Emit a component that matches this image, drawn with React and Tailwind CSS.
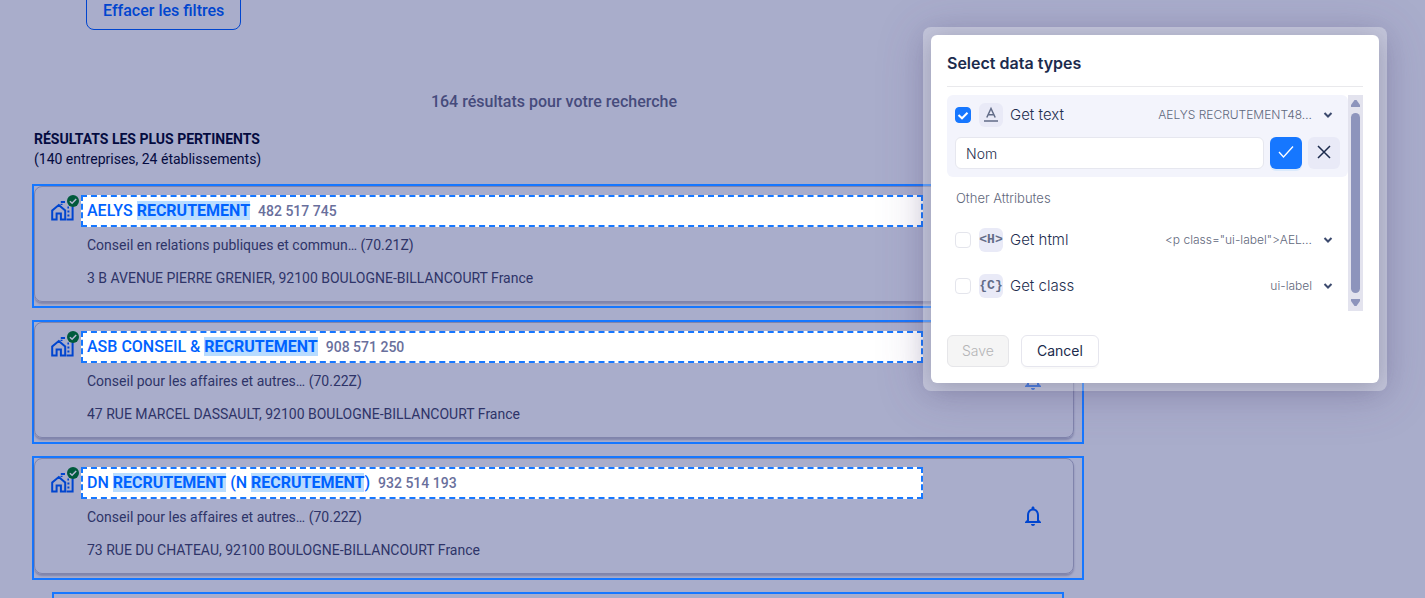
import React, { useState } from 'react';
import { MdNotificationsNone } from 'react-icons/md';

const companies = [
  {
    name: ['AELYS ', '*RECRUTEMENT'],
    siren: '482 517 745',
    activity: 'Conseil en relations publiques et commun… (70.21Z)',
    address: '3 B AVENUE PIERRE GRENIER, 92100 BOULOGNE-BILLANCOURT France'
  },
  {
    name: ['ASB CONSEIL & ', '*RECRUTEMENT'],
    siren: '908 571 250',
    activity: 'Conseil pour les affaires et autres… (70.22Z)',
    address: '47 RUE MARCEL DASSAULT, 92100 BOULOGNE-BILLANCOURT France'
  },
  {
    name: ['DN ', '*RECRUTEMENT', ' (N ', '*RECRUTEMENT', ')'],
    siren: '932 514 193',
    activity: 'Conseil pour les affaires et autres… (70.22Z)',
    address: '73 RUE DU CHATEAU, 92100 BOULOGNE-BILLANCOURT France'
  }
];

function CompanyIcon() {
  return (
    <div className="relative w-6 h-6 mt-0.5 shrink-0">
      <svg viewBox="0 0 24 24" className="w-6 h-6" fill="none" stroke="#0045cf" strokeWidth="2">
        <path d="M1.2 22.5V13.5L7.8 8L14.2 13.5V22.5H9.9V16.5H5.6V22.5H1.2Z" />
        <path d="M10.5 8V6.8M9.8 5H14M15.5 22.5H21.6V9.5" />
        <path d="M16.4 10.5H18M16.4 14.5H18.4M16.4 18.5H18.4" />
      </svg>
      <svg viewBox="0 0 12 12" className="absolute -top-0.5 left-4 w-3 h-3">
        <circle cx="6" cy="6" r="6" fill="#005a3c" />
        <path d="M2.9 6.2L5.1 8.2L9.2 4" fill="none" stroke="#b4b8d4" strokeWidth="1.5" />
      </svg>
    </div>
  );
}

function CompanyCard({ company }) {
  return (
    <li className="border-2 border-[#1677ff] pr-2 pb-1">
      <article className="flex rounded-lg border border-[#8084ac] shadow-[0_2px_2px_rgba(70,72,125,0.4)] pl-4">
        <div className="pt-2">
          <CompanyIcon />
        </div>
        <div className="flex-1 min-w-0 ml-1.5 pt-2 pb-[13px] text-sm leading-5 text-[#2e3468]">
          <h3 className="h-8 flex items-center border-2 border-dashed border-[#1677ff] bg-white pl-1 text-base font-medium text-[#0062ff]">
            <a href="#" className="whitespace-pre leading-5">
              {company.name.map((part, i) =>
                part.startsWith('*') ? (
                  <mark key={i} className="bg-[#b8dcff] text-[#0062ff] font-bold">{part.slice(1)}</mark>
                ) : (
                  <span key={i}>{part}</span>
                )
              )}
            </a>
            <span className="ml-2 text-sm text-[#696f9c]">{company.siren}</span>
          </h3>
          <p className="mt-2 pl-1.5">{company.activity}</p>
          <p className="mt-[13px] pl-1.5">{company.address}</p>
        </div>
        <div className="w-[150px] flex items-center justify-end pr-7">
          <button type="button" aria-label="Notifications" className="text-[#0045cf]">
            <MdNotificationsNone size={24} />
          </button>
        </div>
      </article>
    </li>
  );
}

function Chevron() {
  return (
    <svg viewBox="0 0 10 10" className="w-2.5 h-2.5 shrink-0" fill="none" stroke="#3c4a6e" strokeWidth="2">
      <path d="M1.5 3L5 6.5L8.5 3" />
    </svg>
  );
}

function TypeRow({ id, label, value, glyph, checked, onChange }) {
  return (
    <div className="flex items-center h-6">
      <span className="relative w-4 h-4 shrink-0">
        <input
          id={id}
          type="checkbox"
          checked={checked}
          onChange={onChange}
          className="block w-4 h-4 appearance-none rounded border border-[#e4e5ec] bg-white checked:bg-[#1677ff] checked:border-[#1677ff]"
        />
        {checked && (
          <svg viewBox="0 0 16 16" className="absolute inset-0 w-4 h-4 pointer-events-none" fill="none" stroke="white" strokeWidth="2">
            <path d="M3.5 8L7 11.3L12.5 5.8" />
          </svg>
        )}
      </span>
      <span className="ml-2 w-6 h-6 rounded-md bg-[#e9eaf7] flex items-center justify-center shrink-0 text-[#626c88]">{glyph}</span>
      <label htmlFor={id} className="ml-[7px] text-[15px] leading-5 font-light text-[#1f2f50]">{label}</label>
      <span className="ml-auto min-w-0 text-xs leading-5 font-light text-[#5f687c] whitespace-nowrap">{value}</span>
      <button type="button" aria-label={`Expand ${label}`} className="ml-[11px] mr-[7px]">
        <Chevron />
      </button>
    </div>
  );
}

function Scrollbar() {
  return (
    <div className="w-[15px] bg-[#e3e3ee] flex flex-col items-center py-1">
      <svg viewBox="0 0 9 9" className="w-[9px] h-[9px]" fill="#8d94bc">
        <path d="M3.5 1H5.5L9 6V8H0V6Z" />
      </svg>
      <div className="flex-1 w-[9px] my-[5px] rounded-full bg-[#8d94bc]"></div>
      <svg viewBox="0 0 9 9" className="w-[9px] h-[9px]" fill="#8d94bc">
        <path d="M3.5 8H5.5L9 3V1H0V3Z" />
      </svg>
    </div>
  );
}

function DataTypesDialog() {
  const [selected, setSelected] = useState({ text: true, html: false, class: false });
  const toggle = (key) => setSelected({ ...selected, [key]: !selected[key] });

  return (
    <div className="absolute top-[27px] right-[38px] w-[464px] p-2 rounded-lg bg-white/30 shadow-[0_6px_48px_rgba(90,70,130,0.22)] font-[Inter,sans-serif]">
      <section role="dialog" aria-labelledby="dialog-title" className="rounded-md bg-white p-4 shadow-[0_4px_24px_rgba(60,60,90,0.3)]">
        <h2 id="dialog-title" className="h-9 text-base leading-6 font-semibold text-[#1c2b4d] border-b border-[#e9e9ec]">
          Select data types
        </h2>
        <div className="mt-2 flex h-[216px]">
          <div className="flex-1 min-w-0">
            <div className="rounded-md bg-[#f3f4fc] p-2">
              <TypeRow
                id="get-text"
                label="Get text"
                value="AELYS RECRUTEMENT48…"
                checked={selected.text}
                onChange={() => toggle('text')}
                glyph={
                  <svg viewBox="0 0 24 24" className="w-6 h-6" fill="none" stroke="currentColor" strokeWidth="1.5">
                    <path d="M7.8 14.5L12 5.5L16.2 14.5M9.2 11.8H14.8M5 18H19" />
                  </svg>
                }
              />
              <div className="mt-2.5 flex gap-1.5">
                <input
                  aria-label="Name"
                  defaultValue="Nom"
                  className="flex-1 min-w-0 h-8 rounded-md border border-[#e6e7ef] bg-white px-2.5 text-sm font-light text-[#1f2f50]"
                />
                <button type="button" aria-label="Confirm" className="w-8 h-8 rounded-md bg-[#1677ff] shadow-[0_2px_0_rgba(5,145,255,0.1)] flex items-center justify-center">
                  <svg viewBox="0 0 16 16" className="w-4 h-4" fill="none" stroke="white" strokeWidth="1.3">
                    <path d="M1 7L5.5 12L15 1.5" />
                  </svg>
                </button>
                <button type="button" aria-label="Discard" className="w-8 h-8 rounded-md bg-[#e9eaf7] flex items-center justify-center">
                  <svg viewBox="0 0 16 16" className="w-4 h-4" fill="none" stroke="#1c2b4d" strokeWidth="1.5">
                    <path d="M2 1L14 13M14 1L2 13" />
                  </svg>
                </button>
              </div>
            </div>
            <p className="mt-[11px] pl-[9px] text-[13px] leading-5 font-light text-[#5f687c]">Other Attributes</p>
            <div className="mt-5 px-2 flex flex-col gap-[22px]">
              <TypeRow
                id="get-html"
                label="Get html"
                value={'<p class="ui-label">AEL…'}
                checked={selected.html}
                onChange={() => toggle('html')}
                glyph={<span className="font-['Liberation_Mono',monospace] text-[13px] font-bold">&lt;H&gt;</span>}
              />
              <TypeRow
                id="get-class"
                label="Get class"
                value="ui-label"
                checked={selected.class}
                onChange={() => toggle('class')}
                glyph={<span className="font-['Liberation_Mono',monospace] text-[13px] font-bold">{'{C}'}</span>}
              />
            </div>
          </div>
          <Scrollbar />
        </div>
        <div className="mt-6 flex gap-3">
          <button type="button" disabled className="h-8 px-3.5 rounded-md border border-[#e6e6e9] bg-[#f5f5f5] text-sm font-light text-[#b4b4b6]">
            Save
          </button>
          <button type="button" className="h-8 px-[15px] rounded-md border border-[#e6e6ee] bg-white text-sm text-[#1c2b4d] shadow-[0_2px_0_rgba(0,0,0,0.02)]">
            Cancel
          </button>
        </div>
      </section>
    </div>
  );
}

export default function App() {
  return (
    <div className="relative h-screen overflow-hidden bg-[#a9adcb] font-[Roboto,sans-serif]">
      <main className="max-w-[1084px] pl-8 flex flex-col">
        <button type="button" className="self-start -mt-2 ml-[54px] h-[38px] px-4 rounded-lg border border-[#0045cf] text-base font-medium text-[#0045cf]">
          Effacer les filtres
        </button>
        <p className="mt-[60px] pr-2 text-center text-base leading-6 font-medium text-[#464b7c]">
          164 résultats pour votre recherche
        </p>
        <div className="mt-[15px] pl-0.5 text-sm leading-5 text-[#040b40]">
          <h2 className="font-bold">RÉSULTATS LES PLUS PERTINENTS</h2>
          <p>(140 entreprises, 24 établissements)</p>
        </div>
        <ul className="mt-[15px] flex flex-col gap-3">
          {companies.map((company) => (
            <CompanyCard key={company.siren} company={company} />
          ))}
          <li className="mx-5 h-20 border-2 border-[#1677ff]"></li>
        </ul>
      </main>
      <DataTypesDialog />
    </div>
  );
}
